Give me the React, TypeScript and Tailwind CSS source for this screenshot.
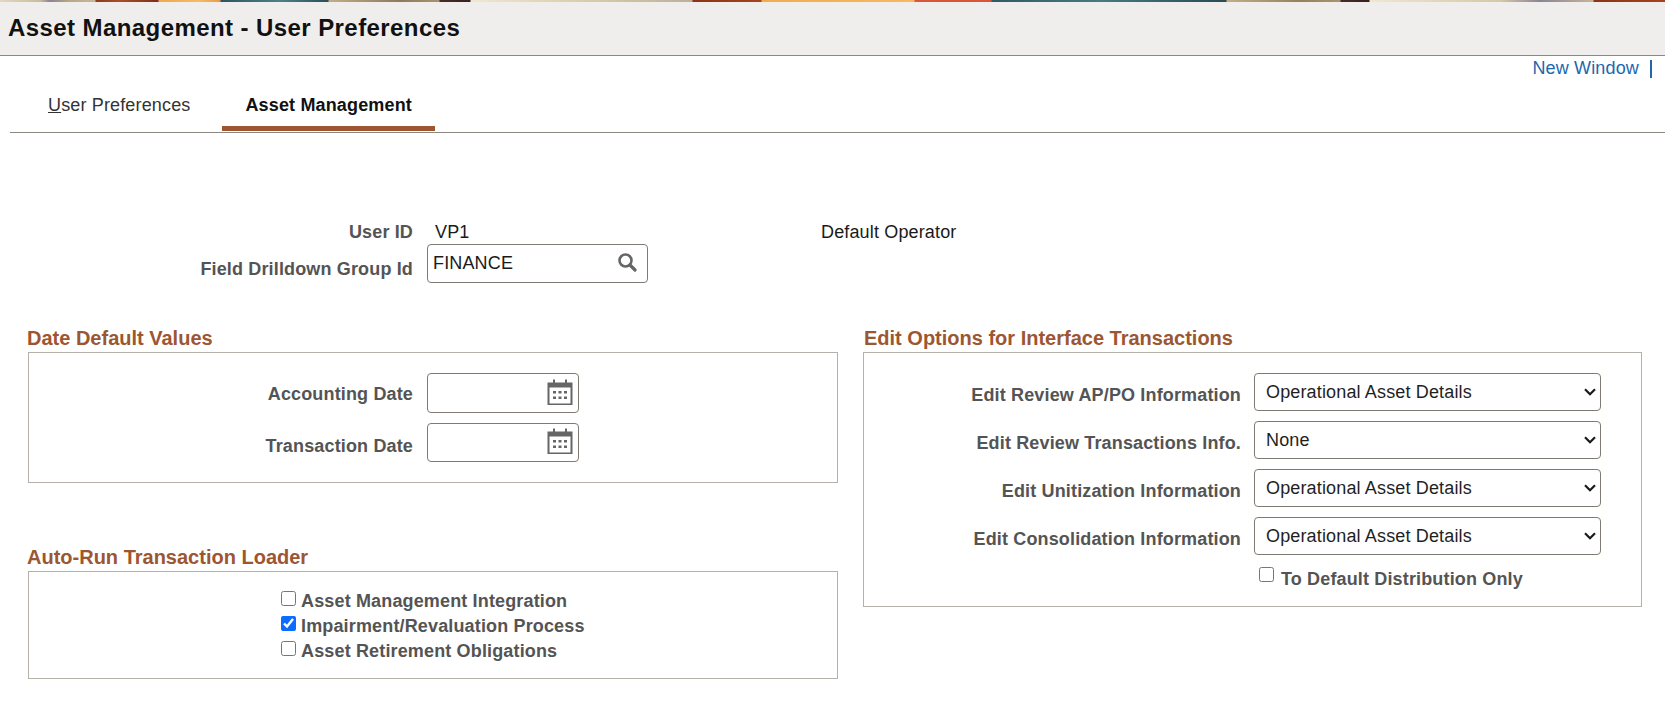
function Cal() {
  return (
    <svg width="26" height="26" viewBox="0 0 26 26" className="-mt-[3px] shrink-0">
      <path d="M1.500 4.500h23v21h-23z" fill="none" stroke="#666" strokeWidth="2" />
      <path d="M1 5h24v3.500H1z" fill="#666" />
      <path d="M7 0.500v6M19 0.500v6" stroke="#666" strokeWidth="2" />
      <path d="M6 12h3v2.500H6zM11.500 12h3v2.500h-3zM17 12h3v2.500h-3zM6 17.500h3V20H6zM11.500 17.500h3V20h-3zM17 17.500h3V20h-3z" fill="#666" />
    </svg>
  );
}

function Check({ checked, lift }: { checked?: boolean; lift?: string }) {
  return <input type="checkbox" defaultChecked={checked} className={`m-0 h-[15px] w-[15px] shrink-0 accent-[#0b6cff] ${lift ?? ""}`} />;
}

function DateRow({ label, h, mt, lift }: { label: string; h: string; mt: string; lift: string }) {
  return (
    <div className={`flex items-center ${mt}`}>
      <span className={`w-[398px] pr-[14px] text-right font-bold text-[#545454] ${lift}`}>{label}</span>
      <div className={`flex w-[152px] items-center justify-end rounded-[4px] border border-[#7f7a72] pr-[5px] ${h}`}>
        <Cal />
      </div>
    </div>
  );
}

function SelectRow({ label, value }: { label: string; value: string }) {
  return (
    <div className="flex h-[38px] items-center">
      <span className="mt-[7px] w-[389px] pr-[13px] text-right font-bold text-[#545454]">{label}</span>
      <div className="relative h-[38px] w-[347px]">
        <select defaultValue={value} className="h-[38px] w-full appearance-none rounded-[4px] border border-[#7f7a72] bg-white pl-[11px] pt-[1px] text-[18px] tracking-[0.15px] text-[#1f1f1f]">
          <option>Operational Asset Details</option>
          <option>None</option>
        </select>
        <svg width="12" height="8" viewBox="0 0 12 8" className="pointer-events-none absolute right-[5px] top-[15px]">
          <path d="M1 1.200l5 5 5-5" fill="none" stroke="#1a1a1a" strokeWidth="2.200" />
        </svg>
      </div>
    </div>
  );
}

export default function App() {
  return (
    <div className="h-[704px] w-[1665px] overflow-hidden bg-white font-['Liberation_Sans',Arial,sans-serif] text-[18px] tracking-[0.15px] text-[#1a1a1a]">
      <div className="h-[2px] bg-[linear-gradient(90deg,#e3d8bf_0,#cdbb9a_40px,#8b8494_50px,#b8a888_70px,#c8b898_95px,#8d3a1e_96px,#a8502a_120px,#7f2f18_158px,#f0a94e_159px,#f5b968_200px,#e79c45_220px,#2f5560_221px,#4c8088_280px,#2c5058_328px,#c2ad88_329px,#8d7a5a_400px,#a8946e_439px,#4a2a28_440px,#3a2022_470px,#f1e7cf_471px,#d6c8a8_600px,#bdb098_692px,#8a3518_693px,#a5431e_761px,#f2ac50_762px,#f6b860_914px,#d8563a_915px,#d9553b_991px,#315a66_992px,#467a84_1100px,#2a4b55_1226px,#c2ad88_1227px,#94815f_1300px,#a8946e_1340px,#4a2a28_1341px,#3a2022_1369px,#f1e7cf_1370px,#d6c8a8_1500px,#8b8494_1540px,#c5b598_1593px,#8a3518_1594px,#a5431e_1665px)]" />
      <div className="h-[54px] border-b border-[#8c8780] bg-[#f0eeec] pl-[8px] pt-[11px] text-[24px] leading-[30px] font-bold tracking-[0.42px] text-[#111]">
        Asset Management - User Preferences
      </div>

      <div className="flex h-[25px] items-center justify-end pr-[13px] text-[#2167ae]">
        <span>New Window</span>
        <span className="ml-[11px] h-[18px] w-[2px] bg-[#2167ae]" />
      </div>

      <div className="ml-[10px] flex h-[52px] border-b border-[#8c8780]">
        <div className="ml-[38px] pt-[11px] text-[#333]"><u>U</u>ser Preferences</div>
        <div className="relative ml-[32px] w-[213px] pt-[11px] pl-[23px] font-bold text-[#111]">
          Asset Management
          <div className="absolute inset-x-0 bottom-[1px] h-[5px] bg-[#9c5632]" />
        </div>
      </div>

      <div className="mt-[87px] flex h-[24px] items-center">
        <span className="w-[413px] text-right font-bold text-[#545454]">User ID</span>
        <span className="ml-[22px] mt-[1px] w-[386px]">VP1</span>
        <span className="mt-[1px]">Default Operator</span>
      </div>
      <div className="flex h-[39px] items-center">
        <span className="mt-[11px] w-[413px] text-right font-bold text-[#545454]">Field Drilldown Group Id</span>
        <div className="ml-[14px] flex h-[39px] w-[221px] items-center justify-between rounded-[4px] border border-[#7f7a72] pl-[5px] pr-[10px]">
          <span className="-mt-[1px]">FINANCE</span>
          <svg width="20" height="20" viewBox="0 0 20 20" className="-mt-[3px]">
            <circle cx="8.500" cy="8.500" r="6" fill="none" stroke="#666" strokeWidth="2.600" />
            <path d="M13 13l5 5" stroke="#666" strokeWidth="3.200" strokeLinecap="round" />
          </svg>
        </div>
      </div>

      <div className="mt-[42px] flex items-start">
        <div className="ml-[27px] w-[811px]">
          <h2 className="h-[27px] text-[20px] leading-[27px] font-bold tracking-normal text-[#9c5632]">Date Default Values</h2>
          <div className="ml-[1px] h-[131px] w-[810px] border border-[#b5b1aa] pt-[20px]">
            <DateRow label="Accounting Date" h="h-[40px]" mt="" lift="mt-[2px]" />
            <DateRow label="Transaction Date" h="h-[39px]" mt="mt-[10px]" lift="mt-[8px]" />
          </div>
          <h2 className="mt-[61px] h-[27px] text-[20px] leading-[27px] font-bold tracking-normal text-[#9c5632]">Auto-Run Transaction Loader</h2>
          <div className="ml-[1px] h-[108px] w-[810px] border border-[#b5b1aa] pt-[16px] pl-[252px] font-bold leading-[25px] text-[#545454]">
            <label className="flex h-[25px] items-center gap-[4px]"><Check lift="-mt-[4px]" /><span className="ml-[1px] mt-[2px]">Asset Management Integration</span></label>
            <label className="flex h-[25px] items-center gap-[4px]"><Check checked lift="-mt-[4px]" /><span className="ml-[1px] mt-[2px]">Impairment/Revaluation Process</span></label>
            <label className="flex h-[25px] items-center gap-[4px]"><Check lift="-mt-[4px]" /><span className="ml-[1px] mt-[2px]">Asset Retirement Obligations</span></label>
          </div>
        </div>
        <div className="ml-[25px] w-[779px]">
          <h2 className="ml-[1px] h-[27px] text-[20px] leading-[27px] font-bold tracking-normal text-[#9c5632]">Edit Options for Interface Transactions</h2>
          <div className="h-[255px] w-[779px] border border-[#b5b1aa] pt-[20px]">
            <div className="ml-[1px] flex flex-col gap-[10px]">
              <SelectRow label="Edit Review AP/PO Information" value="Operational Asset Details" />
              <SelectRow label="Edit Review Transactions Info." value="None" />
              <SelectRow label="Edit Unitization Information" value="Operational Asset Details" />
              <SelectRow label="Edit Consolidation Information" value="Operational Asset Details" />
            </div>
            <label className="ml-[395px] mt-[12px] flex items-start gap-[7px] font-bold text-[#545454]"><Check /><span className="-mt-[1px]">To Default Distribution Only</span></label>
          </div>
        </div>
      </div>
    </div>
  );
}
